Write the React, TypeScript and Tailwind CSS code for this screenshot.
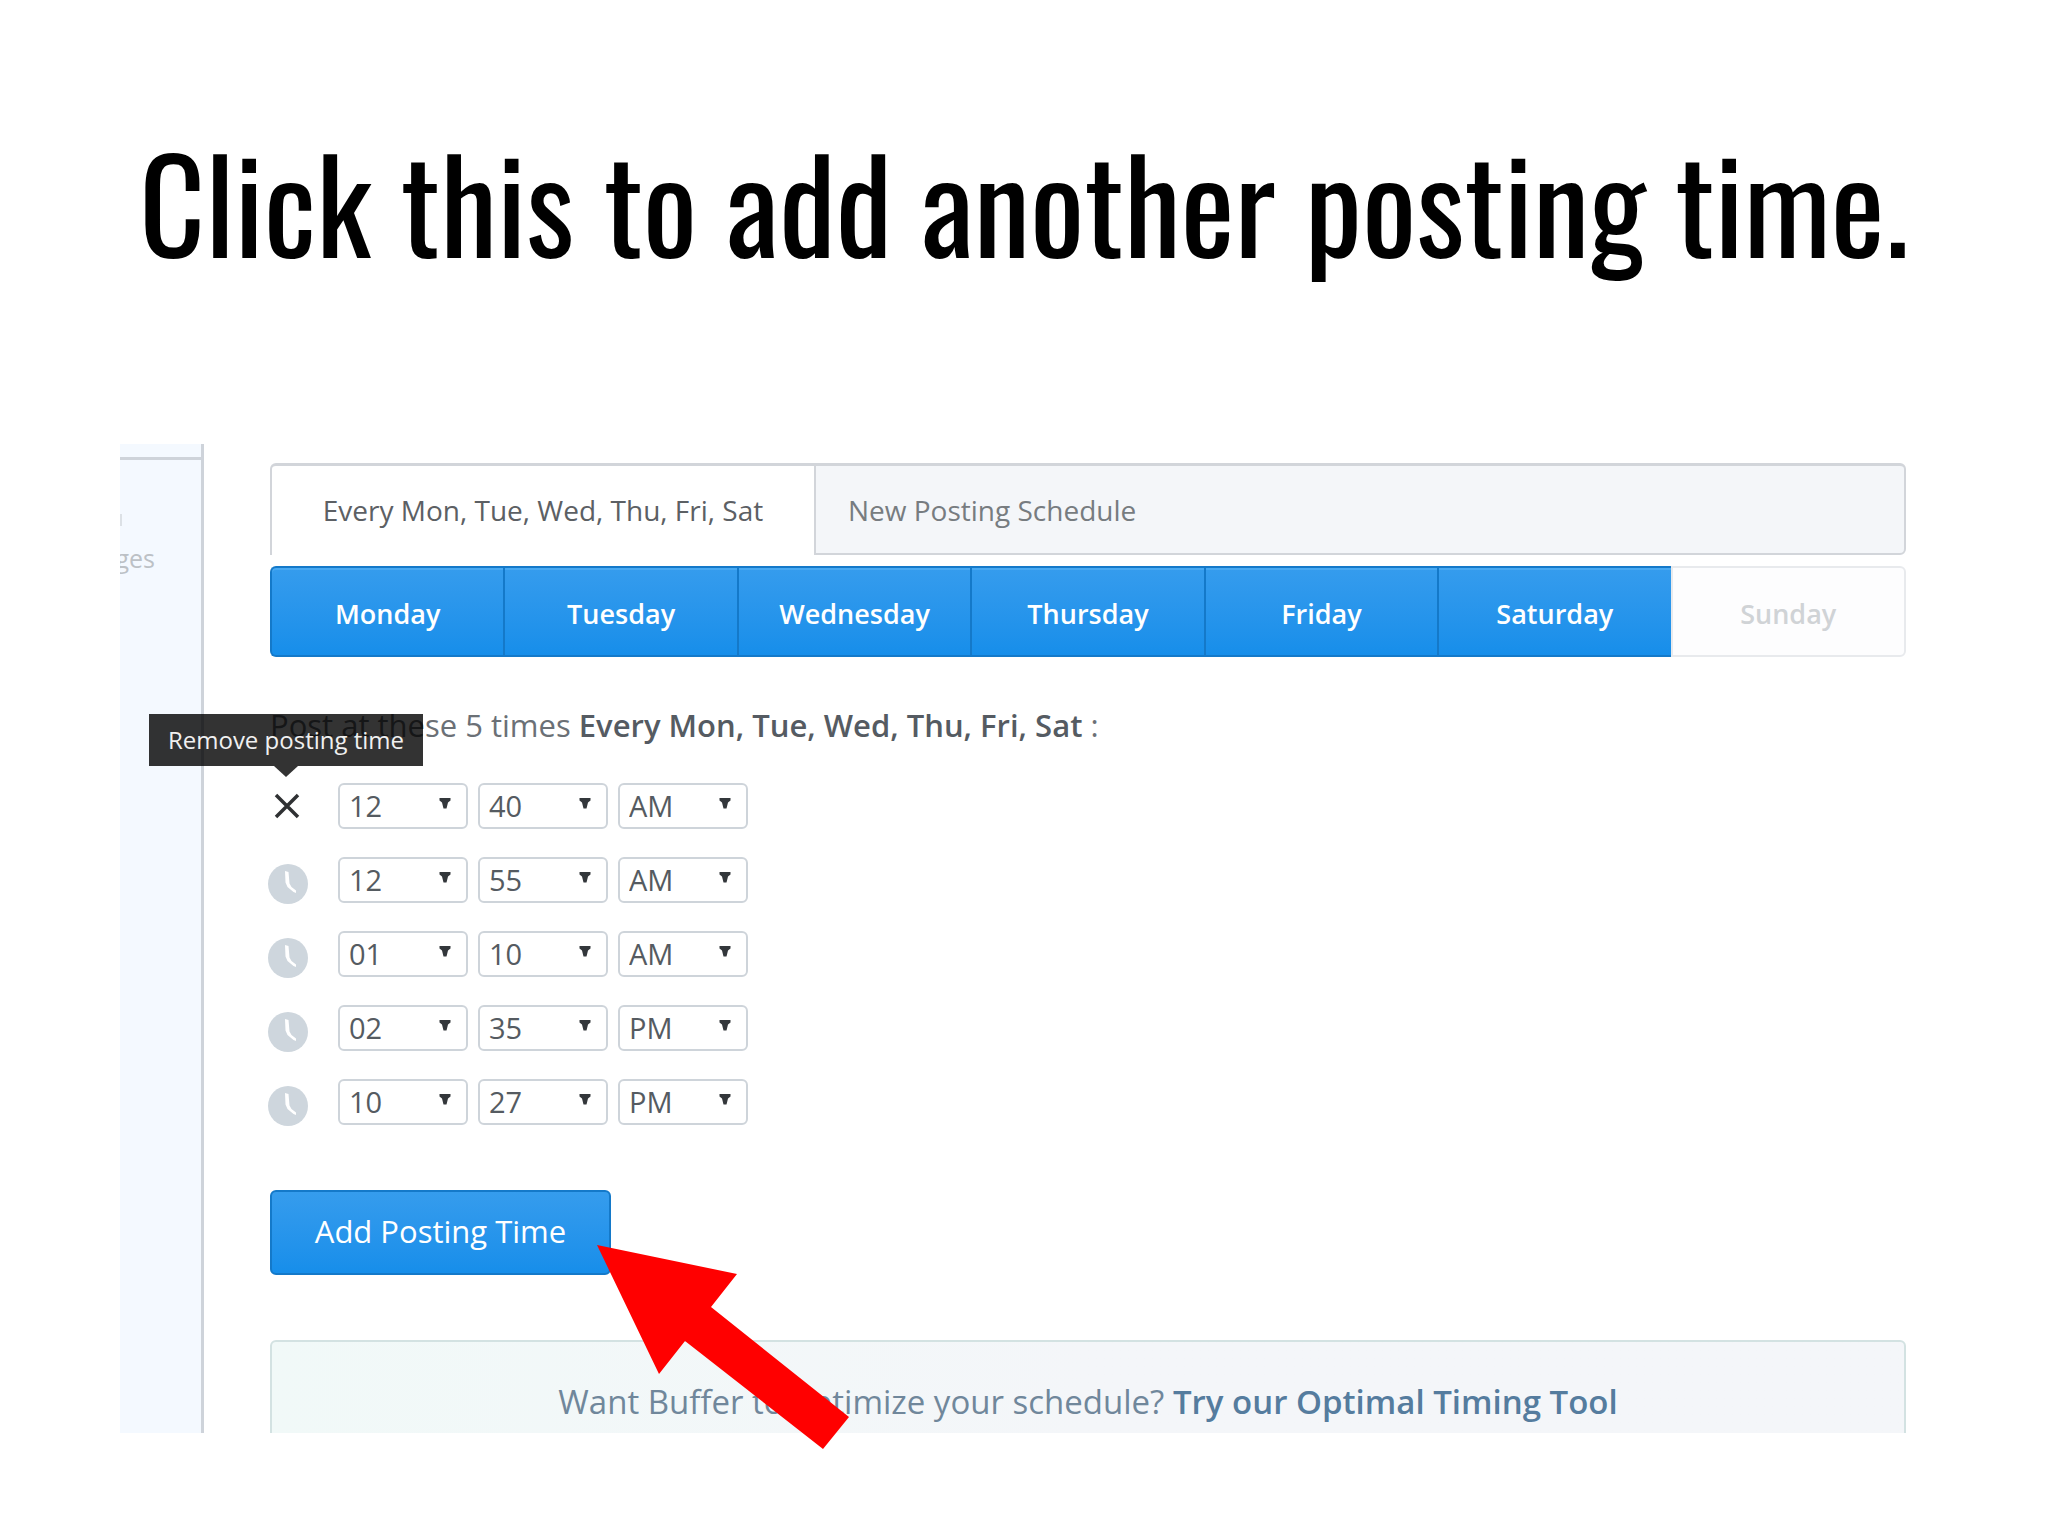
const days = ["Monday", "Tuesday", "Wednesday", "Thursday", "Friday", "Saturday"];

const postingTimes = [
  { hour: "12", minute: "40", period: "AM" },
  { hour: "12", minute: "55", period: "AM" },
  { hour: "01", minute: "10", period: "AM" },
  { hour: "02", minute: "35", period: "PM" },
  { hour: "10", minute: "27", period: "PM" },
];

const hours = ["01", "02", "03", "04", "05", "06", "07", "08", "09", "10", "11", "12"];
const minutes = Array.from({ length: 60 }, (_, i) => String(i).padStart(2, "0"));
const periods = ["AM", "PM"];

interface TimeSelectProps {
  label: string;
  value: string;
  options: string[];
}

const TimeSelect = ({ label, value, options }: TimeSelectProps) => (
  <div className="relative w-[130px]">
    <select
      aria-label={label}
      defaultValue={value}
      className="block h-[46px] w-full appearance-none rounded-md border-2 border-[#ced4da] bg-white pl-[9px] text-[29px] leading-10 text-[#555b61]"
    >
      {options.map((option) => (
        <option key={option}>{option}</option>
      ))}
    </select>
    <svg viewBox="0 0 12 11" className="pointer-events-none absolute top-[15px] right-[17px] h-[11px] w-3" fill="#33373b">
      <path d="M0.500 0h11v2.500l-2.500 2l-1.500 6h-3l-1.500-6l-2.500-2z" />
    </svg>
  </div>
);

const ClockIcon = () => (
  <svg viewBox="0 0 40 40" className="size-10">
    <circle cx="20" cy="20" r="20" fill="#ced6dd" />
    <path d="M17 7l3.500 1l1 11.500l2 3.500l4.500 3.500v2.500l-2.500-1l-6-5l-2-4.500z" fill="#fff" />
  </svg>
);

const CloseIcon = () => (
  <svg viewBox="0 0 26 26" className="size-[26px]">
    <path d="M2 2l22 22M24 2l-22 22" stroke="#2f3133" strokeWidth="3.500" />
  </svg>
);

const Sidebar = () => (
  <aside className="w-[84px] shrink-0 border-r-[3px] border-[#ced3da] bg-[#f4f9ff]">
    <div className="mt-[13px] border-t-[3px] border-[#ced3da] pt-[54px]">
      <div className="h-3 w-0.5 bg-[#dce1e6]" />
      <div className="mt-4 flex w-[35px] justify-end overflow-hidden text-[25px] leading-8 text-[#bcc1c6]">
        ges
      </div>
    </div>
  </aside>
);

const App = () => {
  return (
    <div className="relative min-h-screen bg-white font-['Open_Sans',sans-serif]">
      <h1 className="pt-[104px] text-center font-['Oswald','Liberation_Sans_Narrow',sans-serif] text-[128px] leading-[192px] whitespace-nowrap text-black">
        Click this to add another posting time.
      </h1>

      <div className="mt-[148px] mr-[142px] ml-[120px] flex h-[989px] overflow-hidden">
        <Sidebar />
        <main className="min-w-0 flex-1 pt-[19px] pl-[66px]">
          <div className="flex h-[92px] text-[28px] leading-9">
            <button className="w-[544px] shrink-0 rounded-tl-md border-t-[3px] border-l-2 border-[#d2d5da] bg-white pb-0.5 text-[#5c6064]">
              Every Mon, Tue, Wed, Thu, Fri, Sat
            </button>
            <button className="flex-1 rounded-r-md border-2 border-t-[3px] border-[#d2d5da] bg-[#f4f6f9] pl-8 text-left text-[#777c80]">
              New Posting Schedule
            </button>
          </div>

          <div className="mt-[11px] flex h-[91px] text-[27px] leading-9 font-semibold">
            {days.map((day) => (
              <button
                key={day}
                className="flex-1 border-y-2 border-l-2 border-[#1479c9] bg-linear-to-b from-[#359ced] to-[#168eea] pt-1 text-white shadow-[inset_0_2px_0_#48a9f2] first:rounded-l-md"
              >
                {day}
              </button>
            ))}
            <button className="flex-1 rounded-r-md border-2 border-[#e8eaed] bg-[#fdfdfe] pt-1 text-[#d0d3d6]">
              Sunday
            </button>
          </div>

          <p className="mt-12 text-[31px] leading-10 text-[#6b7076]">
            Post at these 5 times <strong className="font-semibold text-[#555b62]">Every Mon, Tue, Wed, Thu, Fri, Sat</strong> :
          </p>

          <ul className="mt-[38px] space-y-7">
            {postingTimes.map((time, index) => (
              <li key={index} className="flex h-[46px] items-center gap-2.5">
                <div className="relative flex w-[58px] items-center">
                  {index === 0 ? (
                    <>
                      <button aria-label="Remove posting time" className="ml-1">
                        <CloseIcon />
                      </button>
                      <div
                        role="tooltip"
                        className="absolute bottom-[53px] left-[-121px] w-[274px] bg-black/80 text-center text-[24px] leading-[52px] font-medium whitespace-nowrap text-[#f0f0f0]"
                      >
                        Remove posting time
                        <svg viewBox="0 0 24 11" className="absolute top-full left-[125px] h-[11px] w-6" fill="#333">
                          <path d="M0 0h24l-12 11z" />
                        </svg>
                      </div>
                    </>
                  ) : (
                    <div className="-ml-0.5 pt-2">
                      <ClockIcon />
                    </div>
                  )}
                </div>
                <TimeSelect label="Hour" value={time.hour} options={hours} />
                <TimeSelect label="Minute" value={time.minute} options={minutes} />
                <TimeSelect label="AM or PM" value={time.period} options={periods} />
              </li>
            ))}
          </ul>

          <button className="mt-[65px] block h-[85px] w-[341px] rounded-md border-2 border-[#1479c9] bg-linear-to-b from-[#359ced] to-[#168eea] pb-1 text-[31px] leading-10 text-white">
            Add Posting Time
          </button>

          <div className="mt-[65px] h-[140px] rounded-md border-2 border-[#d3e2e2] bg-linear-to-r from-[#f1f9f8] to-[#f4f6f9] to-50% pt-10 text-center text-[33px] leading-10 text-[#70879b]">
            Want Buffer to optimize your schedule?{" "}
            <a href="#optimal" className="font-semibold text-[#557c9e]">Try our Optimal Timing Tool</a>
          </div>
        </main>
      </div>

      {/* Pointer to the add button */}
      <svg viewBox="0 0 252 204" className="pointer-events-none absolute top-[1245px] left-[597px] h-[204px] w-[252px]" fill="#f00">
        <path d="M0 0L140 29L114 62L252 172L226 204L88 96L62 129Z" />
      </svg>
    </div>
  );
};

export default App;
